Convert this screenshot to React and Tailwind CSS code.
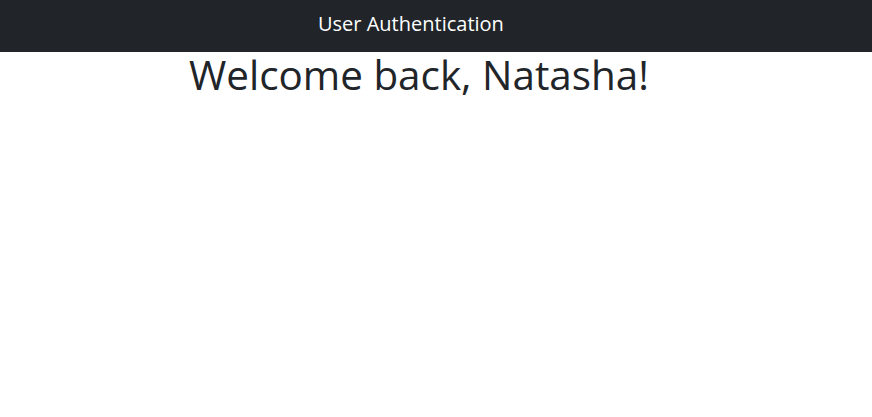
import React from 'react';

const App = () => {
    return (
        <div className="min-h-screen bg-white text-[#212529]">
            <nav className="h-[52px] bg-[#212529] flex items-center">
                <span className="ml-[318px] mb-[4px] text-[20px] text-white font-['Open_Sans',sans-serif] leading-none">
                    User Authentication
                </span>
            </nav>
            <h1 className="ml-[189px] -mt-[1px] text-[40.4px] leading-[48px] font-normal font-['Open_Sans',sans-serif]">
                Welcome back, Natasha!
            </h1>
        </div>
    );
};

export default App;
